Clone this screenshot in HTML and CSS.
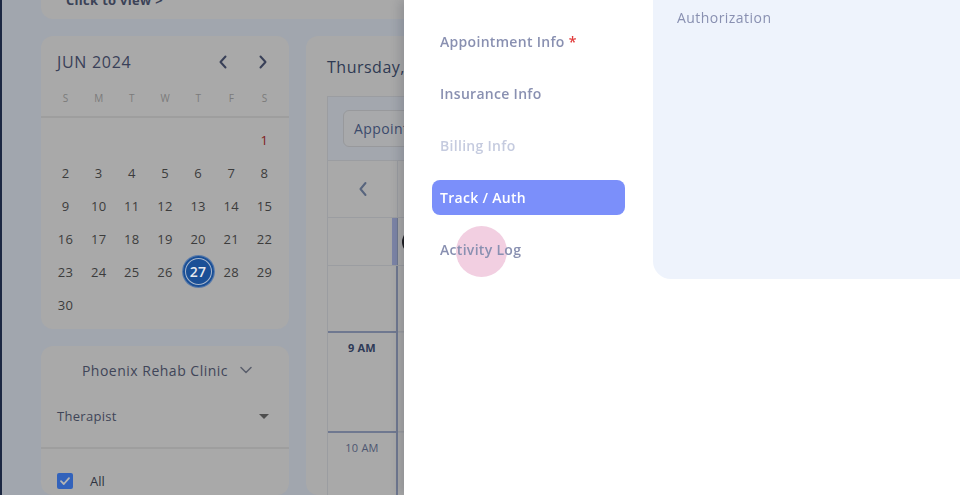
FILE: index.html
```html
<!DOCTYPE html>
<html lang="en">
<head>
<meta charset="utf-8">
<title>Schedule – Track / Auth</title>
<link rel="stylesheet" href="styles.css">
</head>
<body>
<div class="page">
  <div class="topcard"><span class="click">Click to view &gt;</span></div>
  <div class="row">
    <aside class="sidebar">
      <section class="card cal">
        <div class="cal-head">
          <span class="month">JUN 2024</span>
          <div class="arrows">
            <svg class="chev" viewBox="0 0 10 14" width="10" height="14"><path d="M7.5 1.5 2.5 7l5 5.5" fill="none" stroke="currentColor" stroke-width="2" stroke-linecap="round" stroke-linejoin="round"/></svg>
            <svg class="chev" viewBox="0 0 10 14" width="10" height="14"><path d="M2.5 1.5 7.5 7l-5 5.5" fill="none" stroke="currentColor" stroke-width="2" stroke-linecap="round" stroke-linejoin="round"/></svg>
          </div>
        </div>
        <div class="wk"><span>S</span><span>M</span><span>T</span><span>W</span><span>T</span><span>F</span><span>S</span></div>
        <div class="days">
          <span></span><span></span><span></span><span></span><span></span><span></span><span class="red">1</span>
          <span>2</span><span>3</span><span>4</span><span>5</span><span>6</span><span>7</span><span>8</span>
          <span>9</span><span>10</span><span>11</span><span>12</span><span>13</span><span>14</span><span>15</span>
          <span>16</span><span>17</span><span>18</span><span>19</span><span>20</span><span>21</span><span>22</span>
          <span>23</span><span>24</span><span>25</span><span>26</span><span><b class="sel">27</b></span><span>28</span><span>29</span>
          <span>30</span>
        </div>
      </section>
      <section class="card clinic">
        <div class="clinic-name">Phoenix Rehab Clinic
          <svg viewBox="0 0 12 8" width="12" height="8"><path d="M1 1.5 6 6.5l5-5" fill="none" stroke="currentColor" stroke-width="1.5" stroke-linecap="round" stroke-linejoin="round"/></svg>
        </div>
        <div class="select"><span>Therapist</span><svg viewBox="0 0 10 5" width="10" height="5"><path d="M0 0h10L5 5z" fill="currentColor"/></svg></div>
        <div class="check-row">
          <span class="box"><svg viewBox="0 0 16 16" width="16" height="16"><path d="M4 8.2 6.8 11 12 5.2" fill="none" stroke="#b5b5b5" stroke-width="1.8" stroke-linecap="round" stroke-linejoin="round"/></svg></span>
          <span>All</span>
        </div>
      </section>
    </aside>
    <main class="card main">
      <h2 class="date">Thursday, June 27, 2024</h2>
      <div class="sched">
        <div class="sched-head"><div class="input">Appointment Type</div></div>
        <div class="srow nav">
          <div class="tcol"><svg viewBox="0 0 10 16" width="10" height="16"><path d="M7.5 2 2.5 8l5 6" fill="none" stroke="currentColor" stroke-width="2" stroke-linecap="round" stroke-linejoin="round"/></svg></div>
          <div class="dcol"></div>
        </div>
        <div class="srow staff">
          <div class="tcol"><span class="bar"></span></div>
          <div class="dcol"><span class="avatar"></span></div>
        </div>
        <div class="srow slot s0"><div class="tcol"></div><div class="dcol"></div></div>
        <div class="srow slot hour"><div class="tcol"><span class="t strong">9 AM</span></div><div class="dcol"></div></div>
        <div class="srow slot hour"><div class="tcol"><span class="t">10 AM</span></div><div class="dcol"></div></div>
      </div>
    </main>
  </div>
</div>

<div class="drawer">
  <nav class="tabs">
    <div class="tab">Appointment Info <span class="req">*</span></div>
    <div class="tab">Insurance Info</div>
    <div class="tab disabled">Billing Info</div>
    <div class="tab active">Track / Auth</div>
    <div class="tab rippled"><span class="ripple"></span><span class="lbl">Activity Log</span></div>
  </nav>
  <section class="panel">
    <h3 class="panel-title">Authorization</h3>
  </section>
</div>
</body>
</html>
```
FILE: styles.css
```css
* { box-sizing: border-box; }
html, body { margin: 0; height: 100%; }
body {
  background: #a1a6ae;
  font-family: "Open Sans", "Noto Sans", sans-serif;
  overflow: hidden;
  color: #3b4257;
}
.page {
  border-left: 2px solid #1b2742;
  padding-left: 39px;
  height: 100%;
  display: flex;
  flex-direction: column;
  gap: 17px;
}
.topcard {
  margin-top: -41px;
  height: 60px;
  flex: none;
  background: #a9a9a9;
  border-radius: 12px;
  padding: 29px 25px 0;
}
.click { font-size: 13px; font-weight: 700; color: #3b4257; line-height: 16px; letter-spacing: 0.3px; }
.row { display: flex; gap: 17px; flex: 1; min-height: 0; }
.sidebar { width: 248px; flex: none; display: flex; flex-direction: column; gap: 17px; }
.card { background: #a9a9a9; border-radius: 12px; }

/* calendar */
.cal { padding: 14px 8px 8px; }
.cal-head { display: flex; align-items: center; justify-content: space-between; height: 24px; padding: 0 13px 0 8px; }
.month { font-size: 16px; font-weight: 500; color: #394058; letter-spacing: 0.7px; }
.arrows { display: flex; gap: 30px; color: #394058; }
.wk { display: grid; grid-template-columns: repeat(7, 1fr); margin-top: 14px; height: 20px; align-items: center; }
.wk span { text-align: center; font-size: 10px; color: #7b7b7b; }
.days {
  display: grid;
  grid-template-columns: repeat(7, 1fr);
  grid-auto-rows: 33px;
  margin: 8px -8px 0;
  padding: 5px 8px 0;
  border-top: 2px solid #9e9e9e;
}
.days span { display: flex; align-items: center; justify-content: center; font-size: 13px; color: #3c3c3c; letter-spacing: 0.3px; }
.days .red { color: #7e1c1c; }
.sel {
  width: 31px; height: 31px; border-radius: 50%;
  display: flex; align-items: center; justify-content: center;
  background: #1a4f96; color: #e6e9ee; font-weight: 600; font-size: 14px;
  box-shadow: inset 0 0 0 2px #1a4f96, inset 0 0 0 3px #a6b5cb, 0 0 0 1px #5a7bab;
}

/* clinic card */
.clinic { flex: 1; padding: 14px 0 0; display: flex; flex-direction: column; }
.clinic-name { display: flex; align-items: center; justify-content: center; gap: 12px; height: 20px; font-size: 14px; font-weight: 500; color: #3f4558; padding-left: 4px; letter-spacing: 0.5px; }
.clinic-name svg { color: #5a5f6c; }
.select { display: flex; align-items: center; justify-content: space-between; margin: 26px 20px 0 16px; height: 20px; font-size: 13px; color: #3f4558; letter-spacing: 0.3px; }
.select svg { color: #4e4e4e; }
.check-row { border-top: 2px solid #9e9e9e; margin-top: 21px; padding: 23px 16px 0; display: flex; align-items: center; gap: 17px; font-size: 13px; color: #2f3340; }
.box { width: 16px; height: 16px; border-radius: 2px; background: #3262bb; display: flex; }

/* main schedule */
.main { flex: 1; padding: 22px 0 0 21px; overflow: hidden; }
.date { margin: 0; font-size: 16px; font-weight: 500; line-height: 18px; color: #2f3a53; white-space: nowrap; letter-spacing: 0.5px; }
.sched { margin-top: 20px; border: 1px solid #9b9da1; border-right: 0; }
.sched-head { background: #a3a7ae; padding: 13px 0 13px 15px; }
.input { height: 37px; border: 1px solid #98999c; border-radius: 6px; background: #a8a9ab; padding: 0 10px; display: flex; align-items: center; font-size: 14px; color: #3b4a6b; white-space: nowrap; letter-spacing: 0.4px; }
.srow { display: flex; border-top: 1px solid #9b9da1; }
.tcol { width: 70px; flex: none; position: relative; border-right: 1px solid #9b9da1; }
.dcol { flex: 1; }
.nav { height: 57px; }
.nav .tcol { display: flex; align-items: center; justify-content: center; color: #58657e; }
.staff { height: 48px; }
.staff .tcol { display: flex; justify-content: flex-end; border-right-color: #6f7890; }
.bar { width: 5px; background: #7c84a6; }
.staff .dcol { display: flex; align-items: center; padding-left: 4px; }
.avatar { width: 24px; height: 24px; border-radius: 50%; background: #1b1b1f; }
.slot .tcol { border-right: 2px solid #6f7890; }
.s0 { height: 66px; }
.hour { height: 100px; }
.hour .tcol { border-top: 2px solid #6f7890; margin-top: -1px; text-align: center; padding-top: 8px; font-size: 11px; line-height: 14px; }
.hour .dcol { border-top: 1px solid #a0a2a6; }
.t { font-size: 11px; color: #4d5671; letter-spacing: 0.2px; }
.t.strong { font-weight: 700; color: #2e3a57; }

/* drawer */
.drawer {
  position: fixed; top: 0; right: 0; bottom: 0; width: 556px;
  background: #ffffff;
  display: flex;
  box-shadow: -4px 0 10px rgba(30, 35, 50, 0.18);
}
.tabs { width: 249px; flex: none; padding: 24px 28px 0; display: flex; flex-direction: column; gap: 17px; }
.tab {
  width: 193px; height: 35px; padding: 0 8px; border-radius: 8px;
  display: flex; align-items: center;
  font-size: 14px; font-weight: 600; color: #8990b1; white-space: nowrap;
  letter-spacing: 0.3px;
  position: relative;
}
.req { color: #e23b3b; margin-left: 4px; }
.tab.disabled { color: #c5cbdf; }
.tab.active { background: #7b8ffa; color: #ffffff; }
.ripple { position: absolute; left: 24px; top: -6px; width: 51px; height: 51px; border-radius: 50%; background: #f2cfe1; }
.lbl { position: relative; }
.panel { flex: 1; height: 279px; background: #eef3fc; border-bottom-left-radius: 18px; padding: 8px 24px; }
.panel-title { margin: 0; font-size: 14px; font-weight: 500; line-height: 19px; color: #8990b1; letter-spacing: 0.45px; }
```
